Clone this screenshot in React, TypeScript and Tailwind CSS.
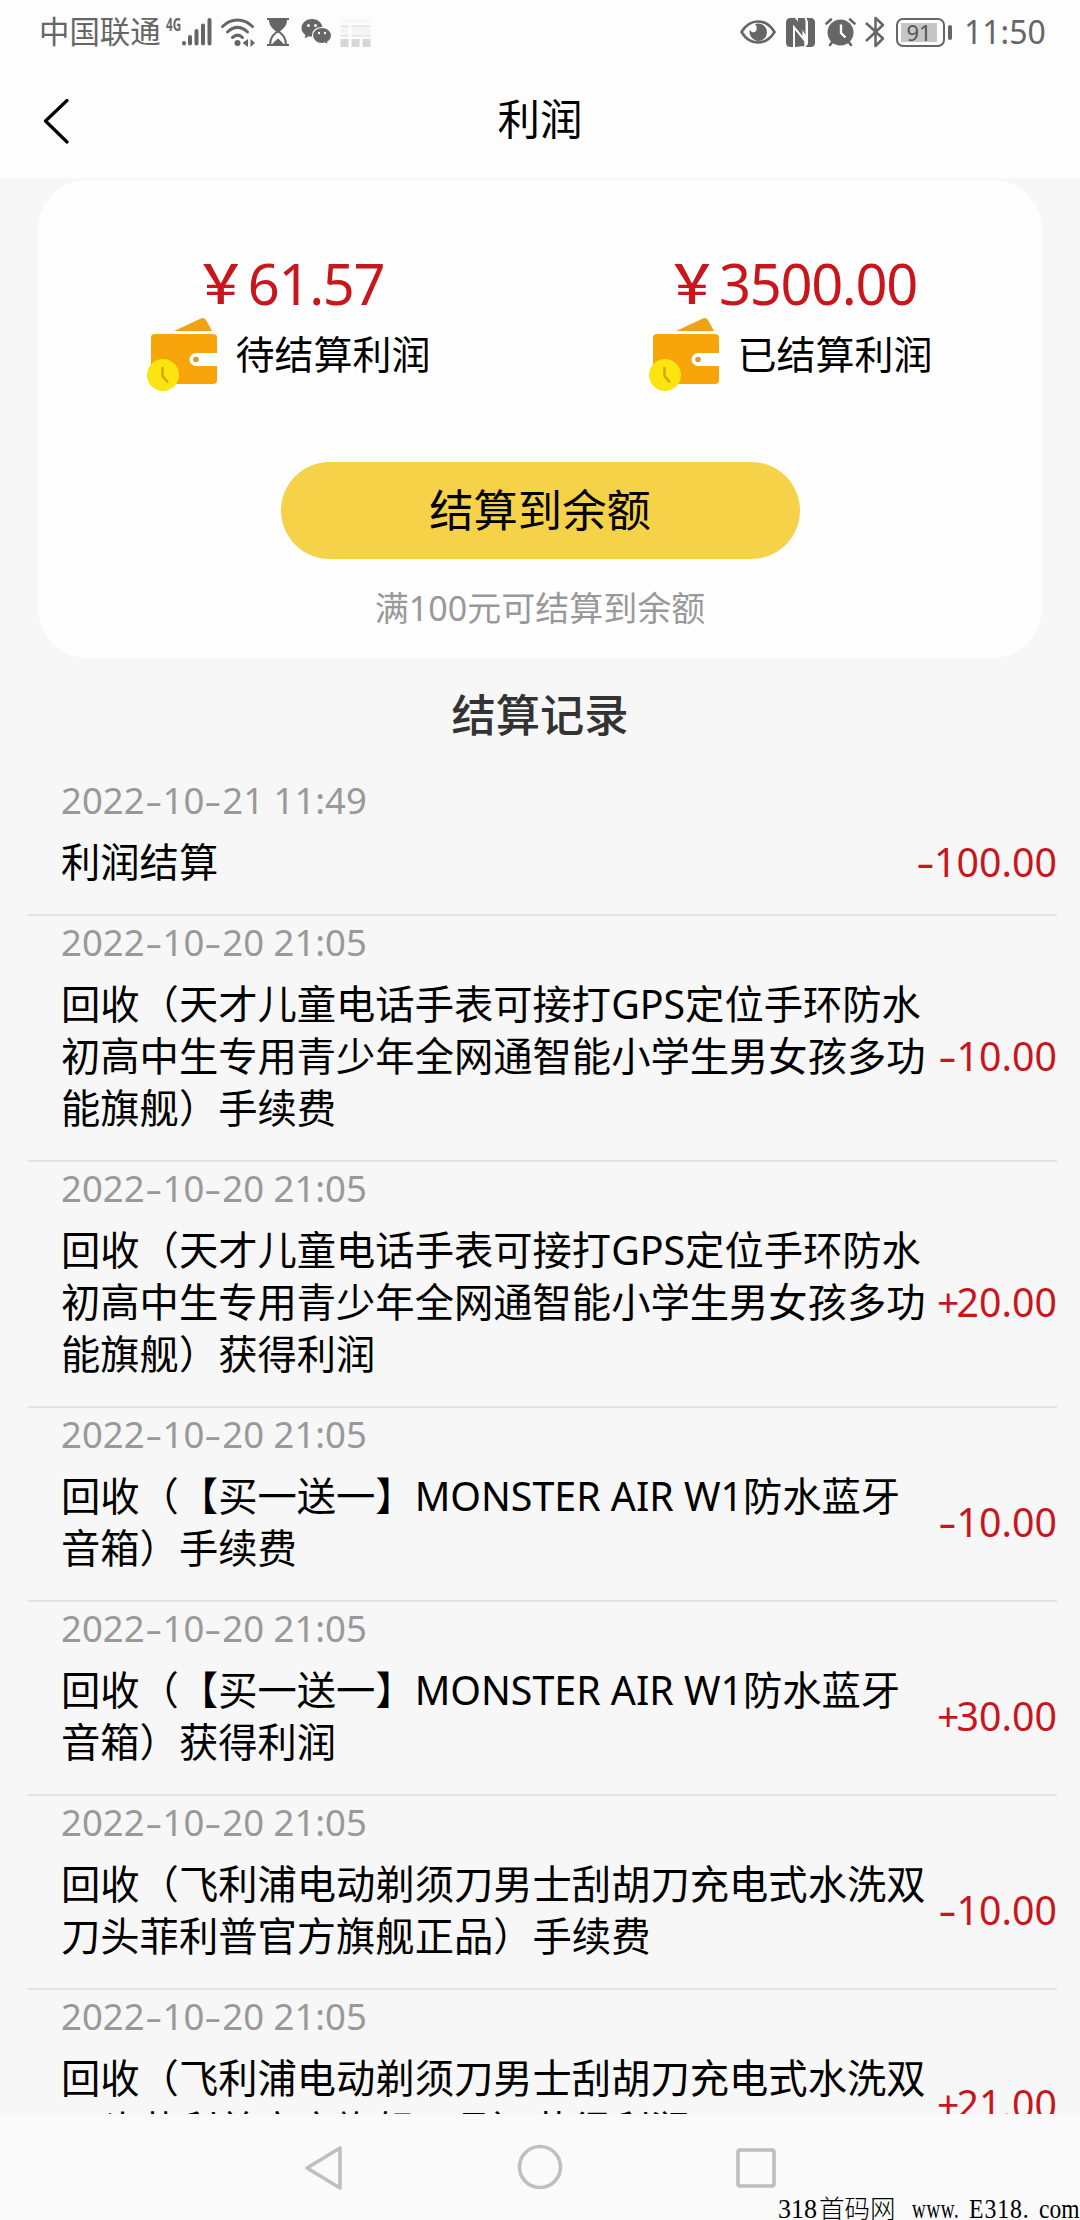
import React from 'react';

const RECORDS = [
  { date: '2022-10-21 11:49', lines: ['利润结算'], amount: '-100.00' },
  {
    date: '2022-10-20 21:05',
    lines: ['回收（天才儿童电话手表可接打GPS定位手环防水', '初高中生专用青少年全网通智能小学生男女孩多功', '能旗舰）手续费'],
    amount: '-10.00',
  },
  {
    date: '2022-10-20 21:05',
    lines: ['回收（天才儿童电话手表可接打GPS定位手环防水', '初高中生专用青少年全网通智能小学生男女孩多功', '能旗舰）获得利润'],
    amount: '+20.00',
  },
  {
    date: '2022-10-20 21:05',
    lines: ['回收（【买一送一】MONSTER AIR W1防水蓝牙', '音箱）手续费'],
    amount: '-10.00',
  },
  {
    date: '2022-10-20 21:05',
    lines: ['回收（【买一送一】MONSTER AIR W1防水蓝牙', '音箱）获得利润'],
    amount: '+30.00',
  },
  {
    date: '2022-10-20 21:05',
    lines: ['回收（飞利浦电动剃须刀男士刮胡刀充电式水洗双', '刀头菲利普官方旗舰正品）手续费'],
    amount: '-10.00',
  },
  {
    date: '2022-10-20 21:05',
    lines: ['回收（飞利浦电动剃须刀男士刮胡刀充电式水洗双', '刀头菲利普官方旗舰正品）获得利润'],
    amount: '+21.00',
  },
];

function StatusBar() {
  return (
    <div className="flex h-16 items-center pl-[39px] pr-[36px] text-[#666]">
      <span className="text-[30.4px] leading-none">中国联通</span>
      <span className="-mt-[17px] ml-[5px] w-[15px] origin-left scale-x-[0.65] text-[18px] leading-none font-bold">4G</span>

      {/* Signal */}
      <svg className="h-[30px] w-[32px]" viewBox="0 0 32 30" stroke="currentColor" strokeWidth="4" strokeLinecap="round">
        <path d="M3 26v0.500M9 20v6.500M15.500 14v12.500M22 8.500v18M28.500 3v23.500" />
      </svg>

      {/* Wifi */}
      <svg className="ml-[7px] h-[30px] w-[36px]" viewBox="0 0 36 30" fill="none" stroke="currentColor" strokeWidth="3" strokeLinecap="round">
        <path d="M2.500 9.500C11 .8 24 .8 32.500 9.500M7.500 15C14 9 21 9 27.500 15M12.500 20.500C16 17.500 19.500 17.500 22.500 20.500" />
        <circle cx="17.500" cy="26" r="3" fill="currentColor" stroke="none" />
        <path d="M28 22v8l-5.500-4zM30.500 22v8l4.500-4z" fill="currentColor" stroke="none" />
      </svg>

      {/* Hourglass */}
      <svg className="ml-[11px] h-[30px] w-[22px]" viewBox="0 0 22 30">
        <path d="M0 1h22v2H0zM0 27h22v2H0z" fill="currentColor" />
        <path d="M2 3h18c0 6-3.500 8.500-9 13C5.500 11.500 2 9 2 3z" fill="currentColor" />
        <path d="M11 14C7 17 3 20 3 28M11 14c4 3 8 6 8 14" fill="none" stroke="currentColor" strokeWidth="2" />
        <path d="M5 27.500c2-3 4-4 6-6 2 2 4 3 6 6z" fill="currentColor" />
      </svg>

      {/* WeChat */}
      <svg className="ml-[12px] h-[28px] w-[31px]" viewBox="0 0 31 28">
        <path d="M11 1C5 1 .5 5 .5 10c0 3 1.500 5.300 4 7l-.8 3.500 4-2.200c1 .3 2.200.4 3.300.4C17 18.700 21.500 15 21.500 10S17 1 11 1z" fill="currentColor" />
        <path d="M21 9.500c-5.500 0-9.500 3.500-9.500 8s4 8 9.500 8c1.200 0 2.200-.1 3.200-.4l3.300 1.900-.8-2.900c2.300-1.500 3.800-3.900 3.800-6.600 0-4.500-4-8-9.500-8z" fill="currentColor" stroke="#fdfdfd" strokeWidth="1.200" />
        <g fill="#fdfdfd">
          <circle cx="7.500" cy="7.500" r="1.500" />
          <circle cx="14.500" cy="7.500" r="1.500" />
          <circle cx="18" cy="15" r="1.200" />
          <circle cx="24" cy="15" r="1.200" />
        </g>
      </svg>

      {/* Faded app icon */}
      <svg className="ml-[8px] h-[30px] w-[31px]" viewBox="0 0 31 30" fill="#f5f5f5">
        <path d="M0 2h31v4H0z" fill="#f8f8f8" />
        <path d="M.5 9h8v10h-8zM11.500 9h19v10h-19z" />
        <path d="M.5 9h8M11.500 9h19M.5 19h8M11.500 19h19" stroke="#d9d9d9" />
        <path d="M.5 22h8v8h-8zM11.500 22h8v8h-8zM22.500 22h8v8h-8z" fill="#d6d6d6" />
      </svg>

      {/* Eye */}
      <svg className="ml-auto h-[24px] w-[36px]" viewBox="0 0 36 24">
        <path d="M1.500 12C10-2 26-2 34.500 12 26 26 10 26 1.500 12z" fill="none" stroke="currentColor" strokeWidth="2.600" />
        <path d="M18 3.500a8.700 8.700 0 1 1-8 6c1 3 4 3.500 5.500 2C17.500 9.500 17 6 15 4.200c1-.5 2-.7 3-.7z" fill="currentColor" />
      </svg>

      {/* NFC */}
      <svg className="ml-[10px] h-[30px] w-[29px]" viewBox="0 0 29 30" fill="currentColor">
        <path d="M4.500 1H9l7.500 9v9L7 7.500V30H4.500Q0 30 0 25.500v-20Q0 1 4.500 1z" />
        <path d="M20.500 1h4q4.500 0 4.500 4.500v20q0 4.500-4.500 4.500h-5L22 27V5z" />
        <path d="M12 1h6.500l1 3v14L12 5zM9 13l9 11 .5 5L9 30z" />
      </svg>

      {/* Alarm */}
      <svg className="ml-[10px] h-[30px] w-[31px]" viewBox="0 0 31 30">
        <circle cx="15.500" cy="15.500" r="13" fill="currentColor" />
        <path d="M1.500 6.500L6 2.500M29.500 6.500L25 2.500M5 28l3-4M26 28l-3-4" stroke="currentColor" strokeWidth="2.600" strokeLinecap="round" />
        <path d="M16 7.500v8.500l4.500 4.500" fill="none" stroke="#fdfdfd" strokeWidth="2.400" />
      </svg>

      {/* Bluetooth */}
      <svg className="ml-[9px] h-[32px] w-[20px]" viewBox="0 0 20 32" fill="none" stroke="currentColor" strokeWidth="2.500" strokeLinejoin="round">
        <path d="M1 7l17 15.500-7.500 7.500V2L18 9 1 25" />
      </svg>

      {/* Battery */}
      <div className="ml-[11px] flex h-[29px] w-[49px] rounded-[7px] border-[2.500px] border-[#666] p-[3px]">
        <div className="flex w-[36px] items-center justify-center bg-[#c6c6c6] text-[22px] leading-none text-[#555]">91</div>
      </div>
      <div className="ml-[3px] h-[15px] w-[4px] rounded-full bg-[#666]" />
      <span className="ml-[12px] w-[80px] text-[32px] leading-none">11:50</span>
    </div>
  );
}

function WalletIcon() {
  return (
    <svg className="h-[74px] w-[71px]" viewBox="0 0 71 74">
      <path d="M27 14L54 1.500q4-1.500 5.500 2.500L65 14z" fill="#f0a116" />
      <path d="M8 17h58q4 0 4 4v42q0 4-4 4H8q-4 0-4-4V21q0-4 4-4z" fill="#f7a50b" />
      <path d="M71 36H49a6.500 6.500 0 0 0 0 13h22z" fill="#fefefe" />
      <circle cx="49" cy="42.500" r="2.800" fill="#d99a2e" />
      <circle cx="16" cy="58" r="16" fill="#fbe40f" />
      <path d="M15.500 50v9l5.500 6.500" fill="none" stroke="#d3a80b" strokeWidth="2.500" />
    </svg>
  );
}

// Widens the hyphens, which the text font draws very short
function Dashed({ text }: { text: string }) {
  const parts = text.split('-');
  return (
    <>
      {parts.map((part, i) => (
        <React.Fragment key={i}>
          {i > 0 && <span className="inline-block w-[18px] text-center"><span className="inline-block scale-x-[1.45]">-</span></span>}
          {part}
        </React.Fragment>
      ))}
    </>
  );
}

function Summary({ amount, label }: { amount: string; label: string }) {
  return (
    <div className="flex flex-1 flex-col items-center">
      <div className="flex h-[64px] items-center pb-[3px] text-[56px] leading-none text-[#c8161d]">
        <span className="text-[54px] font-medium">￥</span>
        <span className="font-[450] tracking-[-1.3px]">{amount}</span>
      </div>
      <div className="mt-[1px] flex items-center">
        <WalletIcon />
        <span className="ml-[17px] pb-[2px] text-[39px] leading-none">{label}</span>
      </div>
    </div>
  );
}

export default function App() {
  return (
    <div className="flex h-[2220px] w-[1080px] flex-col overflow-hidden bg-[#f7f7f7] font-['Noto_Sans','Noto_Sans_CJK_SC',sans-serif] text-black [text-spacing-trim:space-all]">
      <header className="h-[178px] shrink-0 bg-[#fdfdfd]">
        <StatusBar />
        <div className="grid h-[114px] grid-cols-3 items-center">
          <svg className="ml-[43px] h-[46px] w-[26px]" viewBox="0 0 26 46" fill="none" stroke="#000" strokeWidth="3.200" strokeLinecap="round" strokeLinejoin="round">
            <path d="M24 2.500L2.500 23 24 44" />
          </svg>
          <h1 className="pb-[3px] text-center text-[42.5px] leading-none">利润</h1>
        </div>
      </header>

      <main className="min-h-0 flex-1 overflow-hidden">
        <section className="mx-[38px] mt-[2px] flex h-[478px] flex-col items-center rounded-[50px] bg-[#fefefe] pt-[72px]">
          <div className="flex w-full">
            <Summary amount="61.57" label="待结算利润" />
            <Summary amount="3500.00" label="已结算利润" />
          </div>
          <button className="mt-[71px] h-[97px] w-[519px] rounded-full bg-[#f5d248] text-[44.3px] leading-none">结算到余额</button>
          <p className="mt-[32px] text-[34px] leading-none text-[#999]">满100元可结算到余额</p>
        </section>

        <h2 className="mt-[35px] mb-[37px] text-center text-[44.3px] leading-[44px] font-medium text-[#333]">结算记录</h2>

        <ul className="mr-[23px] ml-[28px]">
          {RECORDS.map((r, i) => (
            <li key={i} className="border-b-2 border-[#e3e3e3] pb-[26px] pl-[33px]">
              <div className="h-[62px] text-[36.5px] leading-[52px] text-[#999]"><Dashed text={r.date} /></div>
              <div className="flex items-center justify-between">
                <div className="text-[39.3px] leading-[52px] whitespace-nowrap">
                  {r.lines.map((line) => (
                    <div key={line} className="h-[52px]">{line}</div>
                  ))}
                </div>
                <span className="-ml-2 text-[39.3px] leading-[52px] font-[450] whitespace-nowrap text-[#c8161d]">
                  {r.amount.startsWith('+') ? <><span className="-mr-[3px]">+</span>{r.amount.slice(1)}</> : <Dashed text={r.amount} />}
                </span>
              </div>
            </li>
          ))}
        </ul>
      </main>

      {/* System navigation */}
      <nav className="relative flex h-[106px] shrink-0 justify-center bg-[#fafafa] pt-[30px] text-[#bfbfbf]">
        <svg className="h-[48px] w-[480px]" viewBox="0 0 480 48" fill="none" stroke="currentColor" strokeWidth="3.600" strokeLinejoin="round">
          <path d="M40 4v40L7 24z" />
          <circle cx="240" cy="23" r="20.500" />
          <rect x="438" y="6" width="36" height="36" rx="2" />
        </svg>
        <div className="absolute right-0 -bottom-[3px] flex items-baseline text-[28px] leading-[28px] text-black font-['Liberation_Serif',serif]">
          <span className="w-[41px] origin-left scale-x-[0.93]">318</span>
          <span className="w-[93px] font-['Noto_Sans_CJK_SC',sans-serif] text-[25.5px] leading-[28px] font-light">首码网</span>
          <span className="w-[57px] origin-left scale-x-[0.68] tracking-[1px]">www.</span>
          <span className="w-[70px] origin-left scale-x-[0.85] tracking-[1px]">E318.</span>
          <span className="w-[41px] origin-left scale-x-[0.84]">com</span>
        </div>
      </nav>
    </div>
  );
}
